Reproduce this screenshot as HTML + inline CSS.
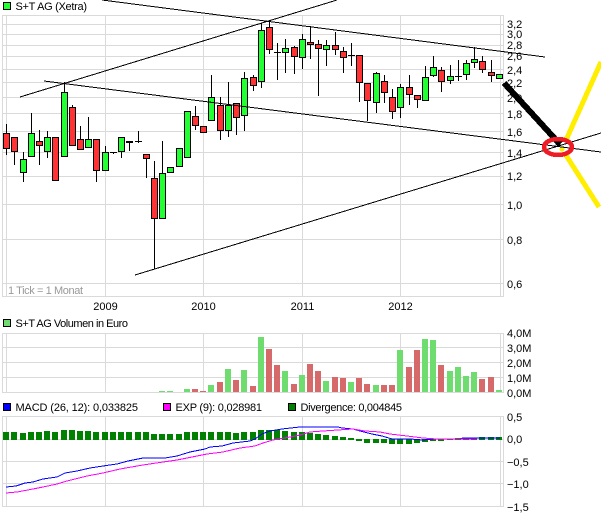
<!DOCTYPE html>
<html><head><meta charset="utf-8"><style>
html,body{margin:0;padding:0;background:#fff;width:601px;height:528px;overflow:hidden}
svg{display:block}
text{font-family:"Liberation Sans",Arial,sans-serif;font-size:11px;fill:#000}
</style></head><body>
<svg width="601" height="528" viewBox="0 0 601 528" xmlns="http://www.w3.org/2000/svg">
<g shape-rendering="crispEdges">
<path fill="none" stroke="#dadada" d="M2 15.5H503M2 24.5H503M2 34.5H503M2 45.5H503M2 56.5H503M2 69.5H503M2 82.5H503M2 97.5H503M2 113.5H503M2 131.5H503M2 152.5H503M2 176.5H503M2 204.5H503M2 239.5H503M2 283.5H503M2 296.5H503M2.5 15V297M6.5 15V297M105.5 15V297M203.5 15V297M302.5 15V297M400.5 15V297M500.5 15V297M503.5 15V297
M2 333.5H503M2 347.5H503M2 362.5H503M2 377.5H503M2 392.5H503M2.5 333V393M6.5 333V393M105.5 333V393M203.5 333V393M302.5 333V393M400.5 333V393M500.5 333V393M503.5 333V393
M2 416.5H503M2 439.5H503M2 461.5H503M2 483.5H503M2 506.5H503M2.5 416V507M6.5 416V507M105.5 416V507M203.5 416V507M302.5 416V507M400.5 416V507M500.5 416V507M503.5 416V507"/>
<!-- volume -->
<path fill="#6edc6e" d="M159 391h6v1h-6zM167 391h6v1h-6zM184 389h6v3h-6zM208 385h6v7h-6zM225 369h6v23h-6zM241 370h6v22h-6zM258 337h6v55h-6zM282 371h6v21h-6zM299 375h6v17h-6zM323 381h6v11h-6zM348 382h6v10h-6zM373 385h6v7h-6zM397 350h6v42h-6zM422 339h6v53h-6zM430 340h6v52h-6zM447 371h6v21h-6zM455 367h6v25h-6zM463 376h6v16h-6zM471 372h6v20h-6zM496 390h6v2h-6z"/>
<path fill="#d66a6a" d="M192 389h6v3h-6zM200 391h6v1h-6zM217 382h6v10h-6zM233 380h6v12h-6zM250 386h6v6h-6zM266 349h6v43h-6zM274 365h6v27h-6zM291 384h6v8h-6zM307 364h6v28h-6zM315 371h6v21h-6zM332 377h6v15h-6zM340 378h6v14h-6zM356 378h6v14h-6zM364 384h6v8h-6zM381 385h6v7h-6zM389 385h6v7h-6zM406 367h6v25h-6zM414 350h6v42h-6zM438 365h6v27h-6zM479 379h6v13h-6zM488 377h6v15h-6z"/>
<!-- MACD bars -->
<path fill="#008000" d="M3 432h6v8h-6zM11 432h6v8h-6zM20 433h6v7h-6zM28 432h6v8h-6zM36 432h6v8h-6zM44 431h6v9h-6zM52 432h6v8h-6zM61 430h6v10h-6zM69 430h6v10h-6zM77 431h6v9h-6zM85 431h6v9h-6zM93 432h6v8h-6zM102 432h6v8h-6zM110 432h6v8h-6zM118 432h6v8h-6zM126 432h6v8h-6zM135 432h6v8h-6zM143 432h6v8h-6zM151 434h6v6h-6zM159 434h6v6h-6zM167 434h6v6h-6zM176 434h6v6h-6zM184 432h6v8h-6zM192 432h6v8h-6zM200 432h6v8h-6zM208 432h6v8h-6zM217 432h6v8h-6zM225 432h6v8h-6zM233 433h6v7h-6zM241 432h6v8h-6zM250 432h6v8h-6zM258 430h6v10h-6zM266 430h6v10h-6zM274 430h6v10h-6zM282 431h6v9h-6zM291 432h6v8h-6zM299 432h6v8h-6zM307 433h6v7h-6zM315 434h6v6h-6zM323 435h6v5h-6zM332 436h6v4h-6zM340 437h6v3h-6zM348 438h6v2h-6zM356 439h6v2h-6zM364 439h6v4h-6zM373 439h6v4h-6zM381 439h6v4h-6zM389 439h6v5h-6zM397 439h6v5h-6zM406 439h6v5h-6zM414 439h6v4h-6zM422 439h6v3h-6zM430 439h6v2h-6zM438 439h6v2h-6zM447 439h6v1h-6zM455 438h6v2h-6zM463 438h6v2h-6zM471 438h6v2h-6zM479 437h6v3h-6zM488 437h6v3h-6zM496 437h6v3h-6z"/>
<path fill="none" stroke="#0000ff" d="M6 487L16 486L25 483L33 482L43 479L57 477L65 473L77 471L90 468L103 466L117 464L128 461L143 458L165 458L177 456L190 452L205 449L210 447L222 446L233 443L250 441L255 439L262 434L270 431L282 429L300 427L338 427L342 428L353 429L360 431L372 434L382 436L392 439L410 439L423 440L433 439L460 439L463 438L500 438"/>
<path fill="none" stroke="#ff00ff" d="M6 493L17 492L33 489L43 487L57 484L67 481L87 476L103 473L120 469L143 465L163 462L177 460L192 457L207 454L223 452L240 448L255 446L263 443L273 440L290 437L300 435L310 432L323 431L338 430L353 429L365 431L380 432L390 434L407 436L423 438L437 439L477 439"/>
<!-- wicks -->
<path fill="none" stroke="#000" d="M6.5 124V155M14.5 137V165M23.5 152V182M31.5 113V157M39.5 130V165M47.5 131V158M64.5 82V157M72.5 105V146M80.5 126V150M88.5 117V148M96.5 139V182M105.5 146V171M113.5 152V154M110 152.5H117M121.5 137V158M129.5 141V151M138.5 131V143M135 141.5H142M146.5 154V178M154.5 161V269M162.5 141V219M211.5 75V120M195.5 106V130M220.5 97V140M228.5 82V137M236.5 103V135M244.5 72V131M253.5 75V91M261.5 23V88M269.5 20V54M277.5 43V80M274 52.5H281M285.5 39V73M294.5 46V74M302.5 34V69M310.5 26V59M318.5 40V96M326.5 40V66M335.5 32V55M343.5 47V73M351.5 43V66M348 55.5H355M359.5 55V102M367.5 83V121M376.5 72V113M384.5 75V103M392.5 89V119M400.5 84V118M409.5 75V105M417.5 95V108M425.5 66V101M433.5 56V77M441.5 67V92M450.5 65V84M458.5 60V81M455 76.5H462M466.5 60V80M474.5 47V68M482.5 56V73M491.5 60V82"/>
<!-- candles red -->
<path fill="#ff3333" stroke="#000" d="M3.5 133.5h6v15h-6zM11.5 137.5h6v14h-6zM36.5 141.5h6v4h-6zM52.5 137.5h6v43h-6zM69.5 107.5h6v38h-6zM77.5 139.5h6v10h-6zM93.5 139.5h6v31h-6zM143.5 154.5h6v4h-6zM151.5 178.5h6v40h-6zM192.5 116.5h6v9h-6zM200.5 126.5h6v6h-6zM217.5 105.5h6v25h-6zM233.5 103.5h6v14h-6zM250.5 77.5h6v8h-6zM266.5 27.5h6v22h-6zM291.5 47.5h6v9h-6zM307.5 42.5h6v2h-6zM315.5 44.5h6v4h-6zM332.5 45.5h6v4h-6zM340.5 51.5h6v6h-6zM356.5 55.5h6v27h-6zM364.5 83.5h6v17h-6zM381.5 81.5h6v11h-6zM389.5 97.5h6v14h-6zM406.5 87.5h6v7h-6zM414.5 95.5h6v4h-6zM438.5 70.5h6v11h-6zM479.5 61.5h6v8h-6zM488.5 72.5h6v3h-6z"/>
<!-- candles green -->
<path fill="#22ff33" stroke="#000" d="M20.5 159.5h6v13h-6zM28.5 133.5h6v23h-6zM44.5 137.5h6v14h-6zM61.5 92.5h6v64h-6zM85.5 139.5h6v8h-6zM102.5 152.5h6v18h-6zM118.5 137.5h6v14h-6zM126.5 141.5h6v1h-6zM159.5 173.5h6v45h-6zM167.5 167.5h6v5h-6zM176.5 148.5h6v18h-6zM184.5 111.5h6v46h-6zM208.5 97.5h6v23h-6zM225.5 105.5h6v25h-6zM241.5 78.5h6v37h-6zM258.5 30.5h6v51h-6zM282.5 48.5h6v4h-6zM299.5 39.5h6v18h-6zM323.5 45.5h6v4h-6zM373.5 73.5h6v29h-6zM397.5 87.5h6v20h-6zM422.5 77.5h6v23h-6zM430.5 67.5h6v8h-6zM447.5 76.5h6v4h-6zM463.5 63.5h6v11h-6zM471.5 59.5h6v3h-6zM496.5 74.5h6v4h-6z"/>
<!-- legend squares -->
<rect x="3.5" y="2.5" width="7" height="7" fill="#22ff33" stroke="#000"/>
<rect x="3.5" y="319.5" width="7" height="7" fill="#6edc6e" stroke="#000"/>
<rect x="3.5" y="403.5" width="7" height="7" fill="#0000ff" stroke="#000"/>
<rect x="163.5" y="403.5" width="7" height="7" fill="#ff00ff" stroke="#000"/>
<rect x="288.5" y="403.5" width="7" height="7" fill="#008000" stroke="#000"/>
</g>
<!-- text -->
<text x="15.5" y="10" textLength="71.5">S+T AG (Xetra)</text>
<text x="15.5" y="327" textLength="112.5">S+T AG Volumen in Euro</text>
<text x="15.5" y="411" textLength="122.5">MACD (26, 12): 0,033825</text>
<text x="175.5" y="411" textLength="86.5">EXP (9): 0,028981</text>
<text x="300.5" y="411" textLength="101.5">Divergence: 0,004845</text>
<text x="8" y="294" textLength="75" style="fill:#999">1 Tick = 1 Monat</text>
<g text-anchor="middle"><text x="105.5" y="310">2009</text><text x="203.5" y="310">2010</text><text x="302.5" y="310">2011</text><text x="400.5" y="310">2012</text></g>
<g>
<text x="507" y="28">3,2</text><text x="507" y="38">3,0</text><text x="507" y="49">2,8</text><text x="507" y="60">2,6</text><text x="507" y="74">2,4</text><text x="507" y="87">2,2</text><text x="507" y="102">2,0</text><text x="507" y="118">1,8</text><text x="507" y="136">1,6</text><text x="507" y="157">1,4</text><text x="507" y="180">1,2</text><text x="507" y="209">1,0</text><text x="507" y="244">0,8</text><text x="507" y="288">0,6</text>
<text x="507" y="337">4,0M</text><text x="507" y="352">3,0M</text><text x="507" y="367">2,0M</text><text x="507" y="382">1,0M</text><text x="507" y="397">0,0M</text>
<text x="507" y="421">0,5</text><text x="507" y="443">0,0</text><text x="507" y="466">−0,5</text><text x="507" y="488">−1,0</text><text x="507" y="511">−1,5</text>
</g>
<!-- trend lines -->
<g fill="none" shape-rendering="crispEdges">
<path stroke="#ffee00" stroke-width="5" d="M601 62L562 149L599 207"/>
<ellipse cx="558" cy="147" rx="14" ry="8.5" fill="#fff"/>
<circle cx="562" cy="149" r="2.5" fill="#ffee00"/>
<path stroke="#000" d="M102 0L545 57M20 97L337 0M44 81L601 152M135 275L601 133"/>
<path stroke="#000" stroke-width="6" d="M504 83L557 141"/>
<path fill="#000" stroke="none" d="M553 141L563 141L558 147z"/>
<ellipse cx="558" cy="147" rx="14" ry="8" stroke="#ee1c25" stroke-width="4.5"/>
</g>
</svg>
</body></html>
